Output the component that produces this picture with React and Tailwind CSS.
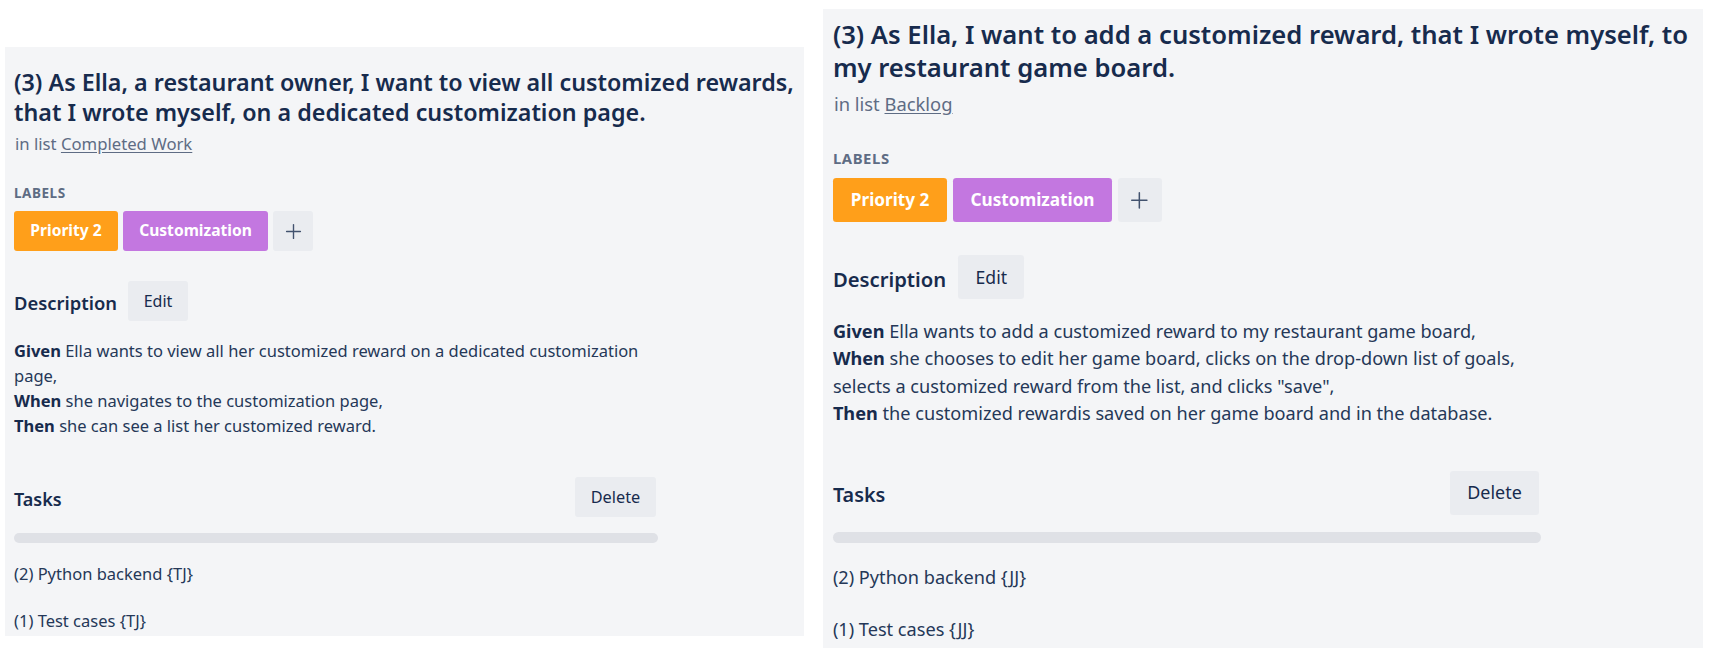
import React from "react";

const FONT = { fontFamily: '"Noto Sans", "Open Sans", sans-serif' };

function PlusIcon() {
  return (
    <svg width="17" height="17" viewBox="0 0 16 16" fill="none">
      <path d="M8 1.5v13M1.5 8h13" stroke="#42526e" strokeWidth="1.3" strokeLinecap="round" />
    </svg>
  );
}

function Card({ title, list, desc, tasks, className, topPad, listMt }) {
  return (
    <div className={"shrink-0 overflow-hidden bg-[#f4f5f7] pl-[9px] " + className}>
      <div className={topPad}>
        <h2 className="text-[23.3px] font-semibold leading-[30px] text-[#172b4d] whitespace-nowrap">
          {title.map((l, i) => (
            <div key={i}>{l}</div>
          ))}
        </h2>
        <div className={"text-[16.7px] leading-[20px] text-[#5e6c84] pl-[1px] " + listMt}>
          in list <span className="underline underline-offset-2">{list}</span>
        </div>
        <div className="mt-[31px] text-[13.5px] font-bold leading-[16px] tracking-[0.04em] text-[#5e6c84]">
          LABELS
        </div>
        <div className="mt-[10px] flex gap-[5px]">
          <div className="flex h-[40px] w-[104px] items-center justify-center rounded-[3px] bg-[#ff9f1a] text-[15.6px] font-bold text-white">
            Priority 2
          </div>
          <div className="flex h-[40px] w-[145px] items-center justify-center rounded-[3px] bg-[#c377e0] text-[15.6px] font-bold text-white">
            Customization
          </div>
          <div className="flex h-[40px] w-[40px] items-center justify-center rounded-[3px] bg-[#eaecf0]">
            <PlusIcon />
          </div>
        </div>
        <div className="w-[644px]">
          <div className="mt-[30px] flex items-center gap-[11px]">
            <div className="text-[18.4px] font-semibold leading-[24px] text-[#172b4d] pt-[4px]">Description</div>
            <div className="flex h-[40px] w-[60px] items-center justify-center rounded-[3px] bg-[#eaecf0] text-[16px] text-[#172b4d]">
              Edit
            </div>
          </div>
          <div className="mt-[17px] text-[16.5px] leading-[25px] text-[#253858]">
            {desc.map((l, i) => (
              <div key={i} className="whitespace-nowrap">
                {l.b && <b className="font-bold text-[#172b4d]">{l.b} </b>}
                {l.t}
              </div>
            ))}
          </div>
          <div className="mt-[39px] flex items-center justify-between">
            <div className="text-[18px] font-semibold leading-[24px] text-[#172b4d] pt-[4px]">Tasks</div>
            <div className="mr-[2px] flex h-[40px] w-[81px] items-center justify-center rounded-[3px] bg-[#eaecf0] text-[16.3px] text-[#172b4d]">
              Delete
            </div>
          </div>
          <div className="mt-[16px] h-[10px] rounded-[5px] bg-[#dfe1e6]" />
          <div className="mt-[21px] text-[16.5px] leading-[20px] text-[#253858]">{tasks[0]}</div>
          <div className="mt-[27px] text-[16.5px] leading-[20px] text-[#253858]">{tasks[1]}</div>
        </div>
      </div>
    </div>
  );
}

export default function App() {
  return (
    <div className="flex h-[659px] w-[1715px] items-start gap-[19px] bg-white pl-[5px]" style={FONT}>
      <Card
        className="mt-[47px] h-[589px] w-[799px]"
        topPad="pt-[20px]"
        listMt="mt-[7px]"
        title={[
          "(3) As Ella, a restaurant owner, I want to view all customized rewards,",
          "that I wrote myself, on a dedicated customization page.",
        ]}
        list="Completed Work"
        desc={[
          { b: "Given", t: "Ella wants to view all her customized reward on a dedicated customization" },
          { t: "page," },
          { b: "When", t: "she navigates to the customization page," },
          { b: "Then", t: "she can see a list her customized reward." },
        ]}
        tasks={["(2) Python backend {TJ}", "(1) Test cases {TJ}"]}
      />
      <Card
        className="mt-[8px] h-[581px] w-[800px] [zoom:1.1]"
        topPad="pt-[8px]"
        listMt="mt-[9px]"
        title={[
          "(3) As Ella, I want to add a customized reward, that I wrote myself, to",
          "my restaurant game board.",
        ]}
        list="Backlog"
        desc={[
          { b: "Given", t: "Ella wants to add a customized reward to my restaurant game board," },
          { b: "When", t: "she chooses to edit her game board, clicks on the drop-down list of goals," },
          { t: "selects a customized reward from the list, and clicks \"save\"," },
          { b: "Then", t: "the customized rewardis saved on her game board and in the database." },
        ]}
        tasks={["(2) Python backend {JJ}", "(1) Test cases {JJ}"]}
      />
    </div>
  );
}
